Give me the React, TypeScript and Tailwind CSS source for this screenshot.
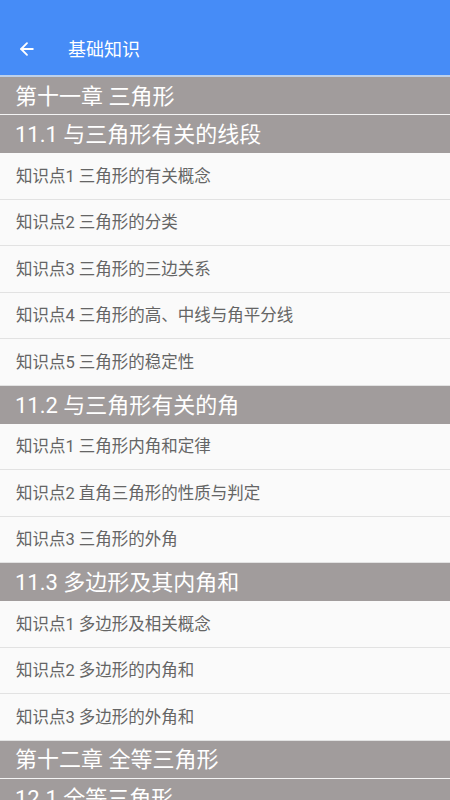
import { ArrowLeft } from 'lucide-react';

type Row = { kind: 'chapter' | 'section' | 'item'; text: string };

const rows: Row[] = [
    { kind: 'chapter', text: '第十一章 三角形' },
    { kind: 'section', text: '11.1 与三角形有关的线段' },
    { kind: 'item', text: '知识点1 三角形的有关概念' },
    { kind: 'item', text: '知识点2 三角形的分类' },
    { kind: 'item', text: '知识点3 三角形的三边关系' },
    { kind: 'item', text: '知识点4 三角形的高、中线与角平分线' },
    { kind: 'item', text: '知识点5 三角形的稳定性' },
    { kind: 'section', text: '11.2 与三角形有关的角' },
    { kind: 'item', text: '知识点1 三角形内角和定律' },
    { kind: 'item', text: '知识点2 直角三角形的性质与判定' },
    { kind: 'item', text: '知识点3 三角形的外角' },
    { kind: 'section', text: '11.3 多边形及其内角和' },
    { kind: 'item', text: '知识点1 多边形及相关概念' },
    { kind: 'item', text: '知识点2 多边形的内角和' },
    { kind: 'item', text: '知识点3 多边形的外角和' },
    { kind: 'chapter', text: '第十二章 全等三角形' },
    { kind: 'section', text: '12.1 全等三角形' },
    { kind: 'item', text: '知识点1 全等形与全等三角形' },
];

export default function App() {
    return (
        <div
            className="w-[450px] h-[800px] overflow-hidden bg-[#fafafa]"
            style={{ fontFamily: 'Roboto, "Noto Sans CJK SC", sans-serif' }}
        >
            <div className="h-[75px] bg-[#468cf7] flex items-end pb-[14px]">
                <div className="flex items-center h-[24px]">
                    <ArrowLeft className="w-[20px] h-[20px] text-white ml-[17px]" strokeWidth={2.2} />
                    <span className="ml-[31px] text-[18px] text-white leading-none pt-[2px]">基础知识</span>
                </div>
            </div>
            <div className="h-[2px] bg-[#bcd0ea]" />

            {rows.map((row, i) =>
                row.kind === 'item' ? (
                    <div
                        key={i}
                        className="h-[46.5px] flex items-center pl-[16px] pt-[3px] border-b border-[#e2e2e2] bg-[#fafafa] text-[16.5px] text-[#656565]"
                    >
                        {row.text}
                    </div>
                ) : (
                    <div
                        key={i}
                        className={
                            row.kind === 'chapter'
                                ? 'h-[38px] flex items-center pl-[15px] pt-[1px] bg-[#a19c9c] border-b border-[#f4f4f4] text-[22px] text-white'
                                : 'h-[38px] flex items-center pl-[15px] pt-[1px] bg-[#a19c9c] text-[22px] text-white'
                        }
                    >
                        {row.text}
                    </div>
                )
            )}
        </div>
    );
}
